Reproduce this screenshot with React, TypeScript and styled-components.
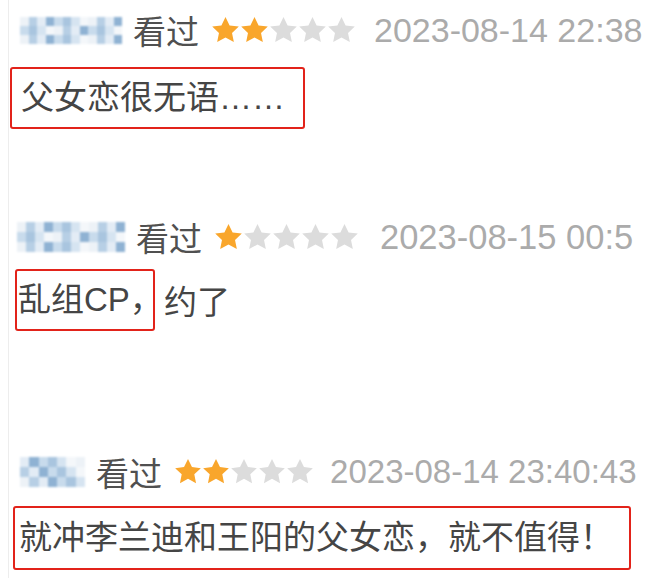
import styled, { createGlobalStyle } from 'styled-components';

const GlobalStyle = createGlobalStyle`
  html, body {
    margin: 0;
    padding: 0;
    background: #fff;
  }
  body {
    font-family: "Liberation Sans", "Noto Sans CJK SC", sans-serif;
  }
`;

const Page = styled.div`
  width: 644px;
  height: 578px;
  overflow: hidden;
  background: #fff;
`;

const List = styled.div`
  margin-left: 8px;
  border-left: 1px solid #ededed;
  min-height: 578px;
  display: flex;
  flex-direction: column;
`;

const Comment = styled.div<{ $top: number }>`
  margin-top: ${p => p.$top}px;
  display: flex;
  flex-direction: column;
`;

const Header = styled.div<{ $indent: number }>`
  display: flex;
  align-items: center;
  height: 40px;
  padding-left: ${p => p.$indent}px;
  white-space: nowrap;
`;

const Mosaic = styled.div<{ $cols: number; $cell: number }>`
  display: grid;
  grid-template-columns: repeat(${p => p.$cols}, ${p => p.$cell}px);
  grid-auto-rows: ${p => Math.round(p.$cell * 1.1)}px;
  filter: blur(0.9px);
  margin-right: 11px;
  flex-shrink: 0;
`;

const Cell = styled.span<{ $c: string }>`
  background: ${p => p.$c};
`;

const Watched = styled.span`
  font-family: "Noto Sans CJK SC", sans-serif;
  font-size: 33px;
  line-height: 40px;
  color: #505050;
  margin-right: 12px;
`;

const StarRow = styled.span<{ $after: number }>`
  display: inline-flex;
  margin-right: ${p => p.$after}px;
  flex-shrink: 0;
`;

const DateText = styled.span<{ $size: number }>`
  font-family: "Liberation Sans", Arial, sans-serif;
  font-size: ${p => p.$size}px;
  line-height: 40px;
  color: #ababab;
`;

const ContentLine = styled.div<{ $gap: number; $indent: number }>`
  margin-top: ${p => p.$gap}px;
  padding-left: ${p => p.$indent}px;
  display: flex;
  align-items: center;
  white-space: nowrap;
  font-size: 33px;
  color: #454545;
`;

const Highlight = styled.span<{ $w: number; $h: number; $padL: number }>`
  display: inline-block;
  box-sizing: border-box;
  width: ${p => p.$w}px;
  height: ${p => p.$h}px;
  line-height: ${p => p.$h - 4}px;
  padding-left: ${p => p.$padL}px;
  border: 2px solid #e2231a;
  border-radius: 3px;
`;

const After = styled.span`
  margin-left: 9px;
`;

const palette = ['#c8dbec', '#a9c5df', '#e3ecf5', '#8fb2d3', '#edf2f7', '#b7cfe5', '#d6e4f1', '#f4f7fa'];

function NameBlur({ seed, cols, cell }: { seed: number; cols: number; cell: number }) {
  const cells = [];
  let s = seed;
  for (let i = 0; i < cols * 3; i++) {
    s = (s * 9301 + 49297) % 233280;
    cells.push(<Cell key={i} $c={palette[s % palette.length]} />);
  }
  return (
    <Mosaic $cols={cols} $cell={cell}>
      {cells}
    </Mosaic>
  );
}

function Stars({ value, size, after }: { value: number; size: number; after: number }) {
  return (
    <StarRow $after={after}>
      {[0, 1, 2, 3, 4].map(i => (
        <svg key={i} width={size} height={size} viewBox="0 0 24 24">
          <path
            d="M12 .8l3.4 7 7.6.9-5.6 5.3 1.5 7.6L12 17.8l-6.9 3.8 1.5-7.6L1 8.7l7.6-.9z"
            fill={i < value ? '#f9a62c' : '#dcdcdc'}
          />
        </svg>
      ))}
    </StarRow>
  );
}

export default function App() {
  return (
    <Page>
      <GlobalStyle />
      <List>
        <Comment $top={10}>
          <Header $indent={11}>
            <NameBlur seed={7} cols={12} cell={8.5} />
            <Watched>看过</Watched>
            <Stars value={2} size={29} after={18} />
            <DateText $size={34}>2023-08-14 22:38</DateText>
          </Header>
          <ContentLine $gap={17} $indent={1}>
            <Highlight $w={295} $h={62} $padL={9}>父女恋很无语……</Highlight>
          </ContentLine>
        </Comment>

        <Comment $top={88}>
          <Header $indent={8}>
            <NameBlur seed={31} cols={12} cell={9} />
            <Watched>看过</Watched>
            <Stars value={1} size={29} after={21} />
            <DateText $size={34.5}>2023-08-15 00:5</DateText>
          </Header>
          <ContentLine $gap={12} $indent={6}>
            <Highlight $w={140} $h={62} $padL={1}>乱组CP，</Highlight>
            <After>约了</After>
          </ContentLine>
        </Comment>

        <Comment $top={121}>
          <Header $indent={11}>
            <NameBlur seed={53} cols={7} cell={9.3} />
            <Watched>看过</Watched>
            <Stars value={2} size={28} after={16} />
            <DateText $size={33}>2023-08-14 23:40:43</DateText>
          </Header>
          <ContentLine $gap={14} $indent={4}>
            <Highlight $w={618} $h={64} $padL={4}>就冲李兰迪和王阳的父女恋，就不值得！</Highlight>
          </ContentLine>
        </Comment>
      </List>
    </Page>
  );
}
